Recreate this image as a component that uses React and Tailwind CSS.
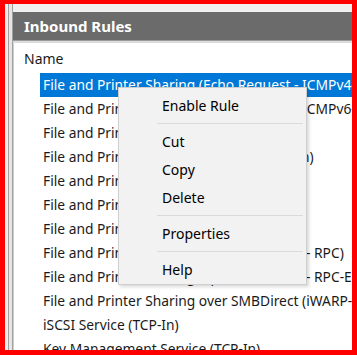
const ROWS = [
  "File and Printer Sharing (Echo Request - ICMPv4-In)",
  "File and Printer Sharing (Echo Request - ICMPv6-In)",
  "File and Printer Sharing (LLMNR-UDP-In)",
  "File and Printer Sharing (NB-Datagram-In)",
  "File and Printer Sharing (NB-Name-In)",
  "File and Printer Sharing (NB-Session-In)",
  "File and Printer Sharing (SMB-In)",
  "File and Printer Sharing (Spooler Service - RPC)",
  "File and Printer Sharing (Spooler Service - RPC-EPMAP)",
  "File and Printer Sharing over SMBDirect (iWARP-In)",
  "iSCSI Service (TCP-In)",
  "Key Management Service (TCP-In)",
];

const MENU = [
  { label: "Enable Rule" },
  { sep: true },
  { label: "Cut" },
  { label: "Copy" },
  { label: "Delete" },
  { sep: true },
  { label: "Properties" },
  { sep: true },
  { label: "Help" },
];

function ContextMenu() {
  return (
    <div className="absolute left-[118px] top-[87px] w-[189px] bg-[#f2f2f2] border border-[#cfcfcf] pt-[3px] pb-[1px] shadow-[2px_2px_3px_rgba(0,0,0,0.15)] text-[14px]">
      {MENU.map((m, i) =>
        m.sep ? (
          <div key={i} className="h-[8px] flex items-center pl-[38px] pr-[3px]">
            <div className="h-px w-full bg-[#dadada]" />
          </div>
        ) : (
          <div key={i} className="h-[28px] flex items-center pl-[43px] text-black">
            {m.label}
          </div>
        )
      )}
    </div>
  );
}

export default function App() {
  return (
    <div
      className="w-[357px] h-[355px] overflow-hidden border-solid border-[#ff0000] border-l-[5px] border-t-[4px] border-r-[5px] border-b-[5px] bg-[#f0f0f0] flex text-[13.8px]"
      style={{ fontFamily: '"Noto Sans", "Open Sans", sans-serif' }}
    >
      <div className="w-[8px] shrink-0 flex">
        <div className="w-[3px]" />
        <div className="w-px bg-[#a0a0a0]" />
        <div className="w-[3px] bg-[#e6e6e6]" />
        <div className="w-px bg-[#a0a0a0]" />
      </div>
      <div className="flex-1 flex flex-col min-w-0">
        <div className="h-[8px] shrink-0" />
        <div className="h-[28px] shrink-0 bg-[#6b6b6b] flex items-center pl-[11px] text-white font-bold text-[15px]">
          Inbound Rules
        </div>
        <div className="h-px bg-[#9a9a9a]" />
        <div className="h-[2px] bg-[#dcdcdc]" />
        <div className="relative flex-1 bg-white border-l border-[#cfcfcf] overflow-hidden">
          <div className="h-[30px] flex items-center pl-[10px] text-[14px] text-[#1a1a1a]">Name</div>
          {ROWS.map((r, i) => (
            <div
              key={i}
              className={
                "h-[24px] ml-[26px] pl-[3px] flex items-center whitespace-nowrap " +
                (i === 0 ? "bg-[#0078d7] text-white" : "text-[#1a1a1a]")
              }
            >
              {r}
            </div>
          ))}
        </div>
      </div>
      <ContextMenu />
    </div>
  );
}
